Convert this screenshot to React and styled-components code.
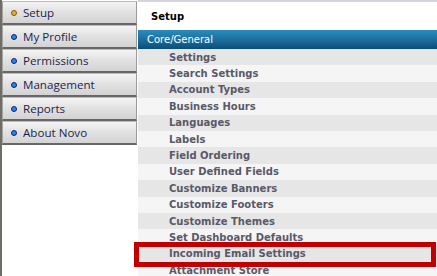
import styled, { createGlobalStyle } from "styled-components";

const GlobalStyle = createGlobalStyle`
  html, body {
    margin: 0;
    padding: 0;
    background: #ffffff;
  }
`;

const Page = styled.div`
  position: relative;
  display: flex;
  width: 437px;
  height: 276px;
  overflow: hidden;
  background: #fff;
`;

const Sidebar = styled.div`
  width: 135px;
  flex-shrink: 0;
  border-left: 2px solid #6e6e66;
  padding-top: 1px;
  display: flex;
  flex-direction: column;
`;

const Tab = styled.div`
  height: 21px;
  flex-shrink: 0;
  display: flex;
  align-items: center;
  gap: 6px;
  padding-left: 8px;
  border-top: 1px solid #bcbcbc;
  border-left: 1px solid #a4a4a4;
  border-right: 1px solid #9a9a9a;
  border-bottom: 2px solid #676767;
  background: linear-gradient(#f4f4f4, #e2e2e2 45%, #d3d3d3);
  font-family: "Open Sans", "Noto Sans", sans-serif;
  font-size: 11.6px;
  color: #1e1e4e;
`;

const Bullet = styled.span`
  width: 4px;
  height: 4px;
  border-radius: 50%;
  background: ${(p) => (p.active ? "#e8b030" : "#2a80f0")};
  border: 1px solid ${(p) => (p.active ? "#7a5a10" : "#0c2a70")};
  flex-shrink: 0;
`;

const Main = styled.div`
  flex: 1;
  margin-left: 1px;
  border-top: 2px solid #d6d4de;
  display: flex;
  flex-direction: column;
`;

const Header = styled.div`
  height: 28px;
  flex-shrink: 0;
  display: flex;
  align-items: center;
  padding-left: 13px;
  font-family: "DejaVu Sans", Verdana, sans-serif;
  font-weight: bold;
  font-size: 10px;
  color: #000;
`;

const SectionBar = styled.div`
  height: 19px;
  flex-shrink: 0;
  display: flex;
  align-items: center;
  padding-left: 9px;
  background: linear-gradient(#2a8cbc, #1a6c9c 55%, #0b4c78);
  font-family: "DejaVu Sans", Verdana, sans-serif;
  font-size: 10px;
  color: #ffffff;
`;

const Row = styled.div`
  height: 16.4px;
  flex-shrink: 0;
  display: flex;
  align-items: center;
  padding-left: 31px;
  background: ${(p) => (p.odd ? "#f5f5f5" : "#e6e6e6")};
  font-family: "DejaVu Sans", Verdana, sans-serif;
  font-weight: bold;
  font-size: 10px;
  color: #595968;
  white-space: nowrap;
`;

const Highlight = styled.div`
  position: absolute;
  left: 134px;
  top: 242px;
  width: 292px;
  height: 15px;
  border: 5px solid #c00000;
  pointer-events: none;
`;

const tabs = ["Setup", "My Profile", "Permissions", "Management", "Reports", "About Novo"];

const items = [
  "Settings",
  "Search Settings",
  "Account Types",
  "Business Hours",
  "Languages",
  "Labels",
  "Field Ordering",
  "User Defined Fields",
  "Customize Banners",
  "Customize Footers",
  "Customize Themes",
  "Set Dashboard Defaults",
  "Incoming Email Settings",
  "Attachment Store",
];

const App = () => {
  return (
    <Page>
      <GlobalStyle />
      <Sidebar>
        {tabs.map((t, i) => (
          <Tab key={t}>
            <Bullet active={i === 0} />
            {t}
          </Tab>
        ))}
      </Sidebar>
      <Main>
        <Header>Setup</Header>
        <SectionBar>Core/General</SectionBar>
        {items.map((item, i) => (
          <Row key={item} odd={i % 2 === 1}>
            {item}
          </Row>
        ))}
      </Main>
      <Highlight />
    </Page>
  );
};

export default App;
